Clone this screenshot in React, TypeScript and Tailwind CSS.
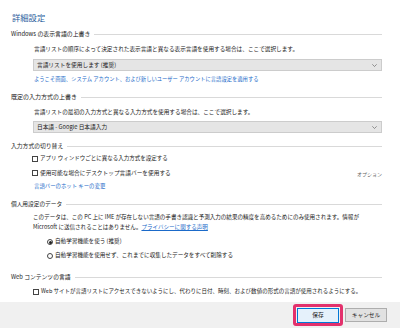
import React from "react";

const F = { fontFamily: '"Noto Sans CJK JP", "Noto Sans", sans-serif' };

function Heading({ text, size }: { text: string; size: string }) {
  return (
    <div className="flex items-center h-[10px]">
      <span className={`${size} text-[#1a1a1a] whitespace-nowrap leading-none`}>{text}</span>
      <div className="flex-1 h-px bg-[#d9d9d9] ml-[4px]" />
    </div>
  );
}

function Box() {
  return <span className="inline-block w-[6px] h-[6px] border border-[#444] bg-white shrink-0" />;
}

function Dropdown({ text }: { text: string }) {
  return (
    <div className="ml-[22px] h-[12px] bg-[#e5e5e5] border border-[#cccccc] flex items-center justify-between pl-[3px] pr-[4px]">
      <span className="text-[5.7px] text-[#1a1a1a] leading-none whitespace-nowrap">{text}</span>
      <svg width="5" height="3" viewBox="0 0 5 3">
        <path d="M0.3 0.3 L2.5 2.5 L4.7 0.3" stroke="#555" strokeWidth="0.6" fill="none" />
      </svg>
    </div>
  );
}

export default function App() {
  return (
    <div style={F} className="w-[400px] h-[328px] bg-white flex flex-col overflow-hidden">
      <div className="flex-1 flex flex-col pl-[11px] pr-[18px] pt-[11px]">
        <div className="h-[12px] flex items-center">
          <span className="text-[8.3px] text-[#2a5d9c] leading-none pl-[1px]">詳細設定</span>
        </div>

        <div className="mt-[6px]">
          <Heading text="Windows の表示言語の上書き" size="text-[5.9px]" />
        </div>
        <div className="mt-[5px] h-[10px] flex items-center pl-[23px]">
          <span className="text-[5.65px] text-[#1a1a1a] leading-none whitespace-nowrap">
            言語リストの順序によって決定された表示言語と異なる表示言語を使用する場合は、ここで選択します。
          </span>
        </div>
        <div className="mt-[5px]">
          <Dropdown text="言語リストを使用します (推奨)" />
        </div>
        <div className="mt-[4px] h-[10px] flex items-center pl-[23px]">
          <span className="text-[5.3px] text-[#1b6ac9] leading-none whitespace-nowrap">
            ようこそ画面、システム アカウント、および新しいユーザー アカウントに言語設定を適用する
          </span>
        </div>

        <div className="mt-[7px]">
          <Heading text="既定の入力方式の上書き" size="text-[6px]" />
        </div>
        <div className="mt-[5px] h-[10px] flex items-center pl-[23px]">
          <span className="text-[5.65px] text-[#1a1a1a] leading-none whitespace-nowrap">
            言語リストの最初の入力方式と異なる入力方式を使用する場合は、ここで選択します。
          </span>
        </div>
        <div className="mt-[4px]">
          <Dropdown text="日本語 - Google 日本語入力" />
        </div>

        <div className="mt-[8px]">
          <Heading text="入力方式の切り替え" size="text-[5.8px]" />
        </div>
        <div className="mt-[3px] h-[10px] flex items-center pl-[21px] gap-[2px]">
          <Box />
          <span className="text-[5.5px] text-[#1a1a1a] leading-none whitespace-nowrap">
            アプリ ウィンドウごとに異なる入力方式を設定する
          </span>
        </div>
        <div className="mt-[4px] h-[10px] flex items-center pl-[21px] gap-[2px]">
          <Box />
          <span className="text-[5.7px] text-[#1a1a1a] leading-none whitespace-nowrap">
            使用可能な場合にデスクトップ言語バーを使用する
          </span>
          <span className="ml-auto text-[5px] text-[#666] leading-none whitespace-nowrap">オプション</span>
        </div>
        <div className="mt-[4px] h-[10px] flex items-center pl-[23px]">
          <span className="text-[5.4px] text-[#1b6ac9] leading-none whitespace-nowrap">
            言語バーのホット キーの変更
          </span>
        </div>

        <div className="mt-[7px]">
          <Heading text="個人用設定のデータ" size="text-[5.7px]" />
        </div>
        <div className="mt-[3px] pl-[22px] text-[5.55px] leading-[10px] text-[#1a1a1a] whitespace-nowrap">
          <div>
            このデータは、この PC 上に IME が存在しない言語の手書き認識と予測入力の結果の精度を高めるためにのみ使用されます。情報が
          </div>
          <div>
            Microsoft に送信されることはありません。
            <span className="text-[#1b6ac9] underline">プライバシーに関する声明</span>
          </div>
        </div>
        <div className="mt-[5px] h-[10px] flex items-center pl-[36px] gap-[2px]">
          <span className="w-[6px] h-[6px] rounded-full border border-[#444] flex items-center justify-center shrink-0">
            <span className="w-[3px] h-[3px] rounded-full bg-[#222]" />
          </span>
          <span className="text-[5.6px] text-[#1a1a1a] leading-none whitespace-nowrap">自動学習機能を使う (推奨)</span>
        </div>
        <div className="mt-[4px] h-[10px] flex items-center pl-[36px] gap-[2px]">
          <span className="w-[6px] h-[6px] rounded-full border border-[#444] shrink-0" />
          <span className="text-[5.6px] text-[#1a1a1a] leading-none whitespace-nowrap">
            自動学習機能を使用せず、これまでに収集したデータをすべて削除する
          </span>
        </div>

        <div className="mt-[11px]">
          <Heading text="Web コンテンツの言語" size="text-[5.8px]" />
        </div>
        <div className="mt-[5px] h-[10px] flex items-center pl-[22px] gap-[2px]">
          <Box />
          <span className="text-[5.5px] text-[#1a1a1a] leading-none whitespace-nowrap">
            Web サイトが言語リストにアクセスできないようにし、代わりに日付、時刻、および数値の形式の言語が使用されるようにする。
          </span>
        </div>
      </div>

      <div className="h-[26px] bg-[#f0f0f0] flex items-center justify-end pr-[13px] gap-[2px] shrink-0">
        <div className="w-[50px] h-[22px] border-[3px] border-[#e3316c] rounded-[3px] flex items-center justify-center">
          <div className="w-[42px] h-[15px] bg-[#e5f1fb] border border-[#0078d7] flex items-center justify-center">
            <span className="text-[5.7px] text-[#1a1a1a] leading-none">保存</span>
          </div>
        </div>
        <div className="w-[42px] h-[14px] bg-[#e1e1e1] border border-[#adadad] flex items-center justify-center">
          <span className="text-[5.7px] text-[#1a1a1a] leading-none">キャンセル</span>
        </div>
      </div>
    </div>
  );
}
